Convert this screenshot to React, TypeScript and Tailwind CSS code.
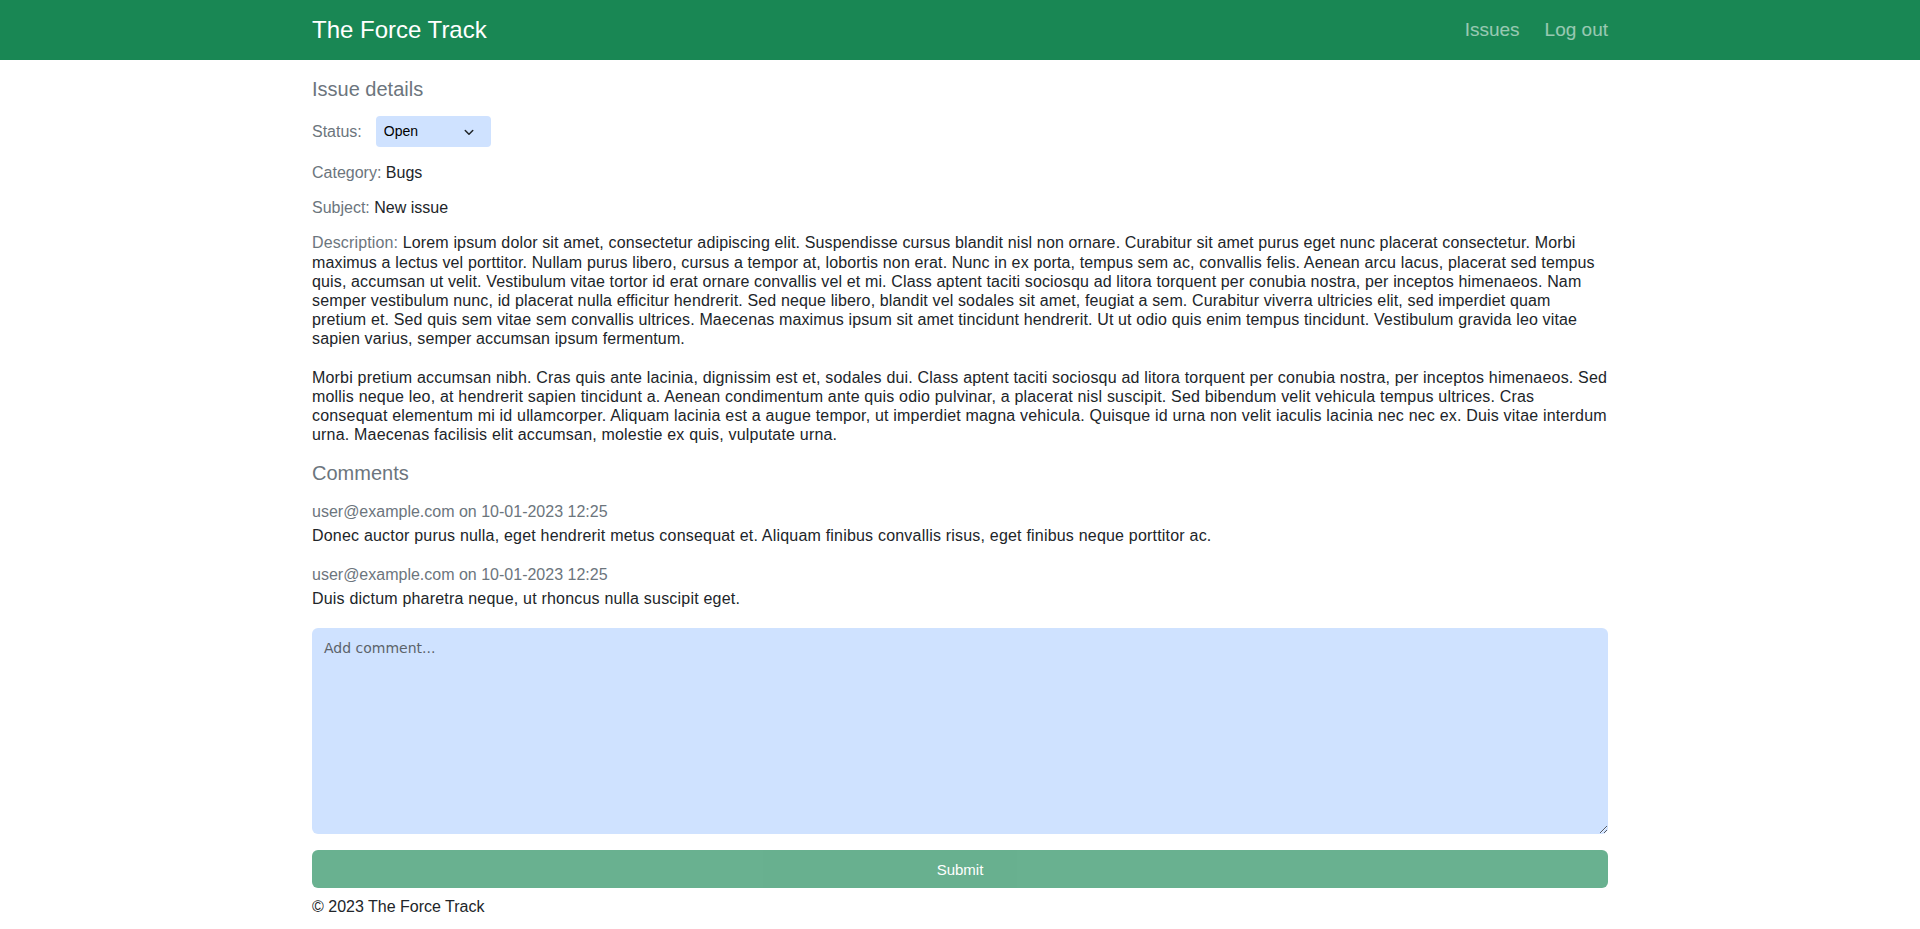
import { useState } from "react";

const comments = [
    {
        author: "user@example.com",
        date: "10-01-2023 12:25",
        text: "Donec auctor purus nulla, eget hendrerit metus consequat et. Aliquam finibus convallis risus, eget finibus neque porttitor ac.",
    },
    {
        author: "user@example.com",
        date: "10-01-2023 12:25",
        text: "Duis dictum pharetra neque, ut rhoncus nulla suscipit eget.",
    },
];

export default function App() {
    const [status, setStatus] = useState("Open");
    const [comment, setComment] = useState("");

    return (
        <div className="min-h-screen bg-white text-[#212529] font-['Liberation_Sans',Arial,sans-serif] text-[16px] leading-[19.2px]">
            {/* Barra superior */}
            <header className="w-full bg-[#198754]">
                <div className="max-w-[1320px] mx-auto px-3 h-[60px] flex items-center justify-between">
                    <a href="/" className="text-white text-[24px] leading-[30px]">
                        The Force Track
                    </a>
                    <nav className="flex items-center gap-[25px] text-[19px]">
                        <a href="/issues" className="text-white/55 hover:text-white/75">
                            Issues
                        </a>
                        <a href="/logout" className="text-white/55 hover:text-white/75">
                            Log out
                        </a>
                    </nav>
                </div>
            </header>

            <main className="max-w-[1320px] mx-auto px-3 pt-[17px]">
                <h2 className="text-[20px] leading-[24px] text-[#6c757d] mb-[15px]">Issue details</h2>

                <div className="flex items-center gap-[14px] mb-4">
                    <span className="text-[#6c757d]">Status:</span>
                    <div className="relative">
                        <select
                            value={status}
                            onChange={e => setStatus(e.target.value)}
                            className="appearance-none w-[115px] h-[31px] rounded-[4px] bg-[#cfe2ff] pl-2 pr-8 text-[14px] text-black font-['Liberation_Sans',Arial,sans-serif] outline-none"
                        >
                            <option>Open</option>
                            <option>In progress</option>
                            <option>Closed</option>
                        </select>
                        <svg
                            className="pointer-events-none absolute right-[16px] top-1/2 -translate-y-1/2"
                            width="12"
                            height="12"
                            viewBox="0 0 16 16"
                            fill="none"
                            stroke="#212529"
                            strokeWidth="2"
                            strokeLinecap="round"
                            strokeLinejoin="round"
                        >
                            <path d="m3 6 5 5 5-5" />
                        </svg>
                    </div>
                </div>

                <p className="mb-4">
                    <span className="text-[#6c757d]">Category:</span> Bugs
                </p>
                <p className="mb-4">
                    <span className="text-[#6c757d]">Subject:</span> New issue
                </p>

                <p className="mb-4 tracking-[0.14px]">
                    <span className="text-[#6c757d]">Description:</span> Lorem ipsum dolor sit amet, consectetur adipiscing elit. Suspendisse cursus blandit nisl non ornare. Curabitur sit amet purus eget nunc placerat consectetur. Morbi maximus a lectus vel porttitor. Nullam purus libero, cursus a tempor at, lobortis non erat. Nunc in ex porta, tempus sem ac, convallis felis. Aenean arcu lacus, placerat sed tempus quis, accumsan ut velit. Vestibulum vitae tortor id erat ornare convallis vel et mi. Class aptent taciti sociosqu ad litora torquent per conubia nostra, per inceptos himenaeos. Nam semper vestibulum nunc, id placerat nulla efficitur hendrerit. Sed neque libero, blandit vel sodales sit amet, feugiat a sem. Curabitur viverra ultricies elit, sed imperdiet quam pretium et. Sed quis sem vitae sem convallis ultrices. Maecenas maximus ipsum sit amet tincidunt hendrerit. Ut ut odio quis enim tempus tincidunt. Vestibulum gravida leo vitae sapien varius, semper accumsan ipsum fermentum.
                    <br />
                    <br />
                    <span className="tracking-[0.19px]">
                        Morbi pretium accumsan nibh. Cras quis ante lacinia, dignissim est et, sodales dui. Class aptent taciti sociosqu ad litora torquent per conubia nostra, per inceptos himenaeos. Sed mollis neque leo, at hendrerit sapien tincidunt a. Aenean condimentum ante quis odio pulvinar, a placerat nisl suscipit. Sed bibendum velit vehicula tempus ultrices. Cras consequat elementum mi id ullamcorper. Aliquam lacinia est a augue tempor, ut imperdiet magna vehicula. Quisque id urna non velit iaculis lacinia nec nec ex. Duis vitae interdum urna. Maecenas facilisis elit accumsan, molestie ex quis, vulputate urna.
                    </span>
                </p>

                <h2 className="text-[20px] leading-[24px] text-[#6c757d] mb-[17px]">Comments</h2>

                {comments.map((c, i) => (
                    <div key={i} className="mb-5">
                        <div className="text-[#6c757d] mb-[5px]">
                            {c.author} on {c.date}
                        </div>
                        <div className="tracking-[0.2px]">{c.text}</div>
                    </div>
                ))}

                <textarea
                    value={comment}
                    onChange={e => setComment(e.target.value)}
                    placeholder="Add comment..."
                    className="block w-full h-[206px] rounded-[6px] bg-[#cfe2ff] px-3 py-[10px] text-[14px] leading-[20px] font-['DejaVu_Sans',Verdana,sans-serif] placeholder:text-[#5c636a] outline-none mt-[2px]"
                />

                <button
                    disabled
                    className="mt-4 w-full h-[38px] rounded-[6px] bg-[#198754] opacity-65 text-white text-[15px]"
                >
                    Submit
                </button>

                <footer className="pt-[9px] pb-[11px]">© 2023 The Force Track</footer>
            </main>
        </div>
    );
}
